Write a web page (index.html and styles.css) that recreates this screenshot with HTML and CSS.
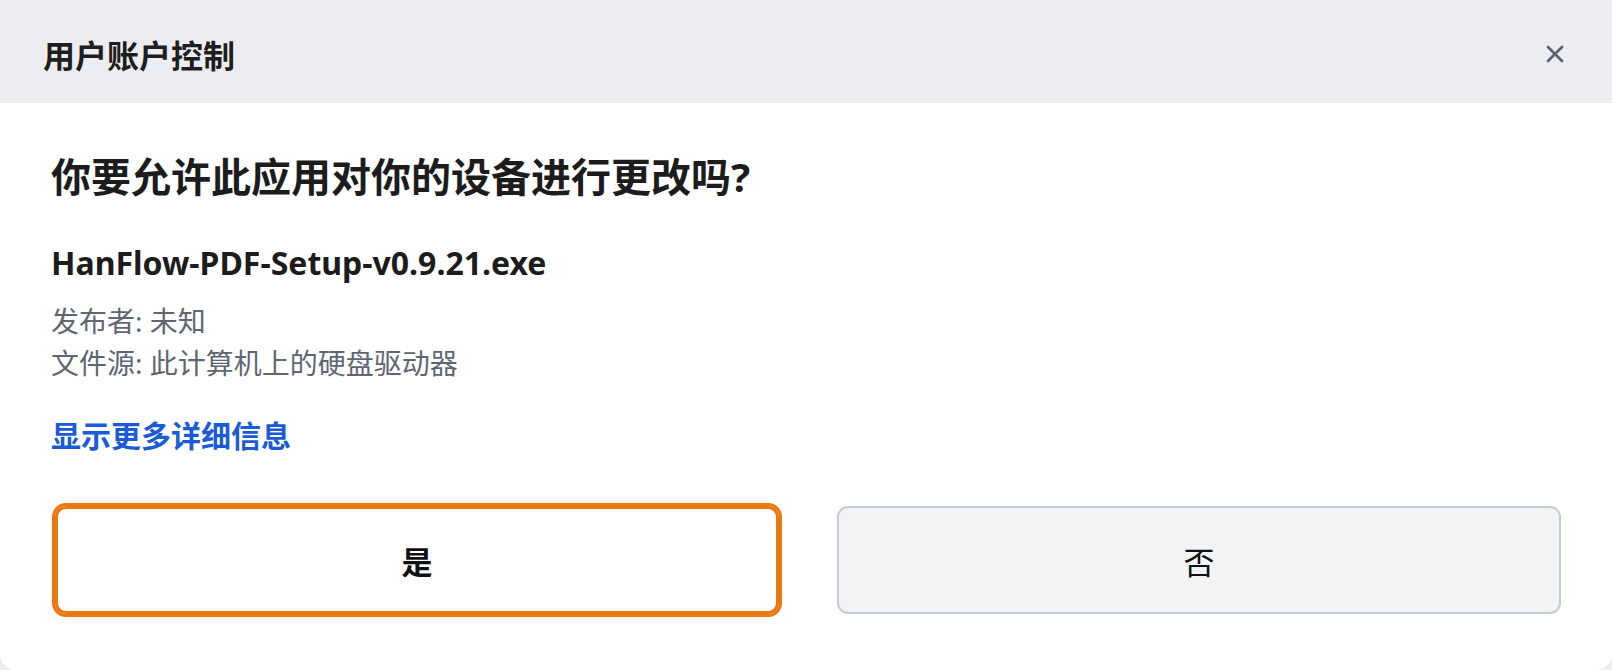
FILE: index.html
```html
<!DOCTYPE html>
<html lang="zh-CN">
<head>
    <meta charset="UTF-8">
    <title>用户账户控制</title>
    <link rel="stylesheet" href="styles.css">
</head>
<body>

<div class="uac-dialog">
    <div class="titlebar">
        <span class="title">用户账户控制</span>
        <button class="close-btn" type="button" aria-label="关闭">
            <svg width="18" height="18" viewBox="0 0 18 18">
                <path d="M2 2 L16 16 M16 2 L2 16" stroke="#5b6372" stroke-width="2.8" stroke-linecap="round" fill="none"/>
            </svg>
        </button>
    </div>

    <div class="content">
        <h1>你要允许此应用对你的设备进行更改吗?</h1>
        <div class="file-name">HanFlow-PDF-Setup-v0.9.21.exe</div>
        <div class="meta">
            <div>发布者: 未知</div>
            <div>文件源: 此计算机上的硬盘驱动器</div>
        </div>
        <a class="more-link" href="#">显示更多详细信息</a>

        <div class="actions">
            <button type="button" class="btn btn-yes">是</button>
            <button type="button" class="btn btn-no">否</button>
        </div>
    </div>
</div>

</body>
</html>
```

FILE: styles.css
```css
body {
    margin: 0;
    background-color: #ededee;
    font-family: "Noto Sans", "Noto Sans CJK SC", sans-serif;
}
.uac-dialog {
    height: 670px;
    background: #fff;
    border-radius: 16px;
    overflow: hidden;
    display: flex;
    flex-direction: column;
}
.titlebar {
    height: 103px;
    box-sizing: border-box;
    padding: 4px 48px 0 43px;
    background: #ecedf1;
    display: flex;
    align-items: center;
    justify-content: space-between;
}
.titlebar .title {
    font-size: 32px;
    font-weight: 700;
    color: #1e1e1e;
}
.close-btn {
    border: none;
    background: none;
    padding: 0;
    width: 18px;
    height: 18px;
    display: flex;
    cursor: pointer;
}
.content {
    padding: 0 51px 0 51px;
}
.content h1 {
    margin: 48px 0 0;
    font-size: 40px;
    line-height: 52px;
    font-weight: 700;
    color: #1c1c1c;
}
.file-name {
    margin-top: 40px;
    font-size: 32px;
    line-height: 40px;
    font-weight: 700;
    color: #1c1c1c;
}
.meta {
    margin-top: 17px;
    font-size: 28px;
    line-height: 42px;
    color: #5f6673;
}
.more-link {
    display: block;
    margin-top: 32px;
    font-size: 30px;
    line-height: 40px;
    font-weight: 700;
    color: #1a5bd6;
    text-decoration: none;
}
.actions {
    margin-top: 50px;
    padding-left: 4px;
    display: grid;
    grid-template-columns: 1fr 1fr;
    gap: 58px;
}
.btn {
    height: 108px;
    border-radius: 11px;
    font-family: "Noto Sans", "Noto Sans CJK SC", sans-serif;
    font-size: 31px;
    color: #111;
    cursor: pointer;
}
.btn-yes {
    background: #fff;
    border: 3px solid #e8780f;
    outline: 3px solid #e8780f;
    font-weight: 700;
}
.btn-no {
    background: #f2f3f5;
    border: 2px solid #c8cdd5;
    font-weight: 400;
}
```
